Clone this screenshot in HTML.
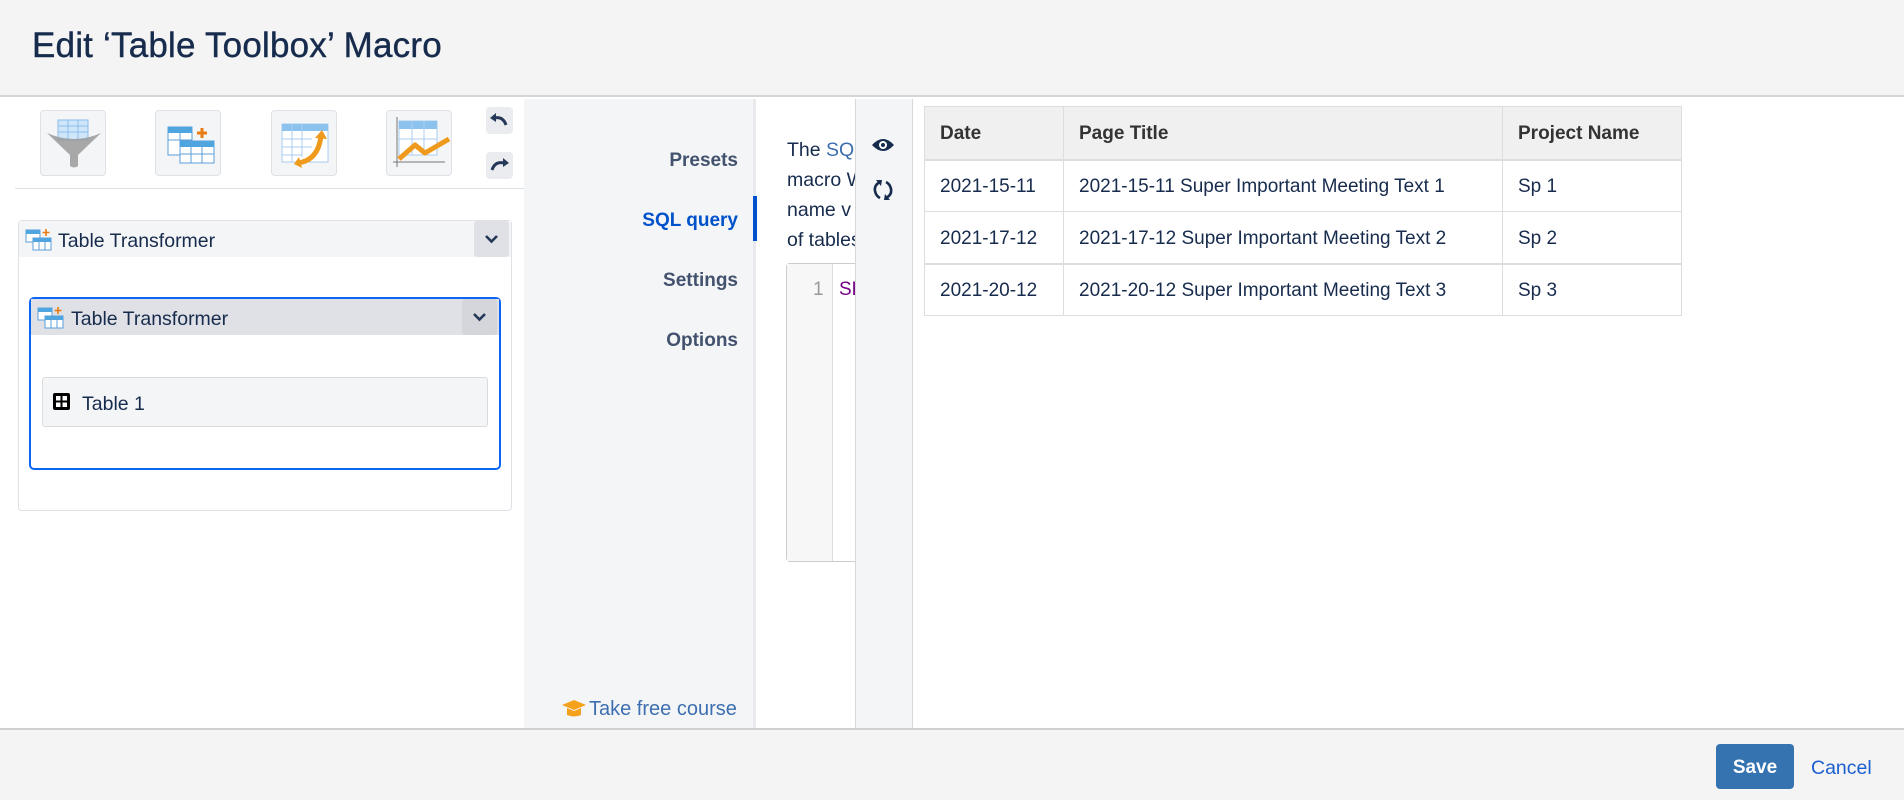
<!DOCTYPE html>
<html><head><meta charset="utf-8">
<style>
*{box-sizing:border-box;margin:0;padding:0}
body{width:1904px;height:800px;overflow:hidden;background:#fff;font-family:"Liberation Sans",sans-serif;color:#172b4d;position:relative}
.abs{position:absolute}
#hdr{left:0;top:0;width:1904px;height:97px;background:#f4f4f4;border-bottom:2px solid #d6d6d6}
#hdr h1{position:absolute;left:32px;top:26px;font-size:35px;font-weight:normal;color:#172b4d;letter-spacing:0.2px;-webkit-text-stroke:0.4px #172b4d}
#ftr{left:0;top:728px;width:1904px;height:72px;background:#f4f4f4;border-top:2px solid #d0d0d0}
.tb{width:66px;height:66px;background:#f4f5f7;border:1px solid #dfe1e6;border-radius:4px;top:110px}
.ur{width:27px;height:27px;background:#ebecf0;border-radius:4px;left:486px}
.nav{right:0;font-size:19px;color:#42526e;text-align:right;width:200px}
td,th{border:1px solid #ddd;padding:3px 15px 0;font-size:19px;text-align:left}
th{background:#f0f0f0;color:#333;font-weight:bold;height:53px}
td{color:#172b4d;height:52px}
</style></head><body>
<div id="hdr" class="abs"><h1>Edit ‘Table Toolbox’ Macro</h1></div>

<div class="abs tb" style="left:40px">
<svg width="66" height="66" viewBox="0 0 66 66"><rect x="17" y="9" width="30" height="20" fill="#cfe6fa" stroke="#8cbde8"/><line x1="17" y1="15" x2="47" y2="15" stroke="#8cbde8"/><line x1="17" y1="21" x2="47" y2="21" stroke="#8cbde8"/><line x1="27" y1="9" x2="27" y2="29" stroke="#8cbde8"/><line x1="37" y1="9" x2="37" y2="29" stroke="#8cbde8"/><path d="M6 22 Q33 34 60 22 L37 44 L37 55 Q33 58 29 55 L29 44 Z" fill="#9a9a9a" opacity="0.85"/></svg></div>
<div class="abs tb" style="left:155px">
<svg width="66" height="66" viewBox="0 0 66 66"><rect x="12" y="16" width="24" height="28" fill="#fff" stroke="#5d9fd8"/><rect x="12" y="16" width="24" height="6" fill="#4ea5e0"/><line x1="12" y1="29" x2="36" y2="29" stroke="#5d9fd8"/><line x1="24" y1="16" x2="24" y2="44" stroke="#5d9fd8"/><rect x="24" y="30" width="34" height="22" fill="#fff" stroke="#5d9fd8"/><rect x="24" y="30" width="34" height="6" fill="#4ea5e0"/><line x1="24" y1="43" x2="58" y2="43" stroke="#5d9fd8"/><line x1="35" y1="30" x2="35" y2="52" stroke="#5d9fd8"/><line x1="46" y1="30" x2="46" y2="52" stroke="#5d9fd8"/><path d="M46 17v10M41 22h10" stroke="#e87b12" stroke-width="3"/></svg></div>
<div class="abs tb" style="left:271px">
<svg width="66" height="66" viewBox="0 0 66 66"><rect x="10" y="13" width="46" height="38" fill="#fff" stroke="#a8cdef"/><rect x="10" y="13" width="46" height="7" fill="#8cc2ee"/><line x1="10" y1="28" x2="40" y2="28" stroke="#a8cdef"/><line x1="10" y1="36" x2="40" y2="36" stroke="#a8cdef"/><line x1="10" y1="44" x2="30" y2="44" stroke="#a8cdef"/><line x1="20" y1="13" x2="20" y2="51" stroke="#a8cdef"/><line x1="30" y1="13" x2="30" y2="46" stroke="#a8cdef"/><path d="M25 52 Q46 50 49 25" stroke="#ef9a1c" stroke-width="5" fill="none"/><path d="M43 27 L50 19 L55 28 Z M27 46 L22 53 L30 57 Z" fill="#ef9a1c"/></svg></div>
<div class="abs tb" style="left:386px">
<svg width="66" height="66" viewBox="0 0 66 66"><rect x="12" y="10" width="38" height="34" fill="#fff" stroke="#a8cdef"/><rect x="12" y="10" width="38" height="8" fill="#8cc2ee"/><line x1="25" y1="10" x2="25" y2="44" stroke="#a8cdef"/><line x1="37" y1="10" x2="37" y2="44" stroke="#a8cdef"/><line x1="12" y1="28" x2="50" y2="28" stroke="#a8cdef"/><line x1="10" y1="6" x2="10" y2="56" stroke="#777"/><line x1="6" y1="51" x2="58" y2="51" stroke="#777"/><path d="M12 48 L28 34 L38 42 L62 28" stroke="#ef9a1c" stroke-width="5" fill="none" stroke-linejoin="round"/></svg></div>
<div class="abs ur" style="top:107px"><svg width="27" height="27" viewBox="0 0 27 27"><path d="M20 18 Q17 9 8 11" stroke="#253858" stroke-width="3" fill="none"/><path d="M4 11 L10 6 L10 15 Z" fill="#253858"/></svg></div>
<div class="abs ur" style="top:152px"><svg width="27" height="27" viewBox="0 0 27 27"><path d="M6 18 Q9 9 18 11" stroke="#253858" stroke-width="3" fill="none"/><path d="M23 11 L17 6 L17 15 Z" fill="#253858"/></svg></div>
<div class="abs" style="left:15px;top:188px;width:509px;height:1px;background:#dfe1e6"></div>

<div class="abs" style="left:18px;top:220px;width:494px;height:291px;border:1px solid #dfe1e6;border-radius:4px"></div>
<div class="abs" style="left:19px;top:221px;width:492px;height:36px;background:#f4f5f7"></div>
<svg class="abs" style="left:25px;top:229px" width="28" height="22" viewBox="0 0 28 22"><rect x="1" y="1" width="14" height="12" fill="#fff" stroke="#5d9fd8"/><rect x="1" y="1" width="14" height="4" fill="#4ea5e0"/><rect x="8" y="9" width="18" height="12" fill="#fff" stroke="#5d9fd8"/><rect x="8" y="9" width="18" height="4" fill="#4ea5e0"/><line x1="14" y1="9" x2="14" y2="21" stroke="#5d9fd8"/><line x1="20" y1="9" x2="20" y2="21" stroke="#5d9fd8"/><path d="M21 0v7M17.5 3.5h7" stroke="#e87b12" stroke-width="1.6"/></svg>
<div class="abs" style="left:58px;top:230px;font-size:19.5px;color:#172b4d">Table Transformer</div>
<div class="abs" style="left:474px;top:221px;width:35px;height:36px;background:#dfe1e6;border-radius:3px"><svg width="35" height="36" viewBox="0 0 35 36"><path d="M12 15 L17.5 20.5 L23 15" stroke="#253858" stroke-width="2.6" fill="none"/></svg></div>

<div class="abs" style="left:29px;top:297px;width:472px;height:173px;border:2px solid #0c66f5;border-radius:5px"></div>
<div class="abs" style="left:31px;top:299px;width:468px;height:36px;background:#dfe1e6"></div>
<svg class="abs" style="left:37px;top:307px" width="28" height="22" viewBox="0 0 28 22"><rect x="1" y="1" width="14" height="12" fill="#fff" stroke="#5d9fd8"/><rect x="1" y="1" width="14" height="4" fill="#4ea5e0"/><rect x="8" y="9" width="18" height="12" fill="#fff" stroke="#5d9fd8"/><rect x="8" y="9" width="18" height="4" fill="#4ea5e0"/><line x1="14" y1="9" x2="14" y2="21" stroke="#5d9fd8"/><line x1="20" y1="9" x2="20" y2="21" stroke="#5d9fd8"/><path d="M21 0v7M17.5 3.5h7" stroke="#e87b12" stroke-width="1.6"/></svg>
<div class="abs" style="left:71px;top:308px;font-size:19.5px;color:#172b4d">Table Transformer</div>
<div class="abs" style="left:462px;top:299px;width:35px;height:36px;background:#d4d6db;border-radius:3px"><svg width="35" height="36" viewBox="0 0 35 36"><path d="M12 15 L17.5 20.5 L23 15" stroke="#253858" stroke-width="2.6" fill="none"/></svg></div>
<div class="abs" style="left:42px;top:377px;width:446px;height:50px;background:#f4f5f7;border:1px solid #dcdcdc;border-radius:3px"></div>
<svg class="abs" style="left:53px;top:393px" width="17" height="17" viewBox="0 0 17 17"><rect x="0" y="0" width="17" height="17" rx="2" fill="#000"/><rect x="3" y="3" width="4.5" height="4.5" fill="#fff"/><rect x="9.5" y="3" width="4.5" height="4.5" fill="#fff"/><rect x="3" y="9.5" width="4.5" height="4.5" fill="#fff"/><rect x="9.5" y="9.5" width="4.5" height="4.5" fill="#fff"/></svg>
<div class="abs" style="left:82px;top:393px;font-size:19.5px;color:#172b4d">Table 1</div>

<div class="abs" style="left:524px;top:99px;width:229px;height:629px;background:#f4f5f7"></div>
<div class="abs" style="left:753px;top:99px;width:3px;height:629px;background:#e9eaee"></div>
<div class="abs" style="left:753px;top:196px;width:4px;height:45px;background:#0052cc"></div>
<div class="abs nav" style="left:538px;top:150px;font-weight:bold">Presets</div>
<div class="abs nav" style="left:538px;top:210px;font-weight:bold;color:#0052cc">SQL query</div>
<div class="abs nav" style="left:538px;top:270px;font-weight:bold">Settings</div>
<div class="abs nav" style="left:538px;top:330px;font-weight:bold">Options</div>
<svg class="abs" style="left:562px;top:700px" width="24" height="17" viewBox="0 0 24 17"><path d="M0 5 L12 0 L24 5 L12 10 Z" fill="#f4a11c"/><path d="M5 8 L5 15 Q12 18 19 15 L19 8 L12 11 Z" fill="#f4a11c"/></svg>
<div class="abs" style="left:589px;top:698px;font-size:20px;color:#3d6fb0">Take free course</div>

<div class="abs" style="left:757px;top:99px;width:98px;height:629px;overflow:hidden;background:#fff">
<div style="position:absolute;left:30px;top:36px;font-size:19.5px;line-height:30px;color:#172b4d;white-space:nowrap">The <span style="color:#3d6fb0">SQL</span> query<br>macro W<br>name v<br>of tables</div>
<div style="position:absolute;left:29px;top:164px;width:120px;height:299px;border:1px solid #ccc;border-radius:4px;background:#fff"></div>
<div style="position:absolute;left:30px;top:165px;width:46px;height:297px;background:#f7f7f7;border-right:1px solid #ddd"></div>
<div style="position:absolute;left:56px;top:180px;font-size:19px;color:#999">1</div>
<div style="position:absolute;left:82px;top:180px;font-size:19px;color:#770088">SELECT</div>
</div>

<div class="abs" style="left:855px;top:99px;width:58px;height:629px;background:#f4f5f7;border-left:1px solid #d8d8d8;border-right:1px solid #d8d8d8"></div>
<svg class="abs" style="left:872px;top:137px" width="22" height="16" viewBox="0 0 22 16"><path d="M0 8 Q11 -4 22 8 Q11 20 0 8 Z" fill="#172b4d"/><circle cx="11" cy="8" r="4" fill="#fff"/><circle cx="11" cy="8" r="2" fill="#172b4d"/></svg>
<svg class="abs" style="left:872px;top:179px" width="22" height="22" viewBox="0 0 22 22"><path d="M8 3 Q2 6 3 12 Q4 17 8 19" stroke="#172b4d" stroke-width="2.6" fill="none"/><path d="M4 1 L10 1 L9 7 Z" fill="#172b4d"/><path d="M14 19 Q20 16 19 10 Q18 5 14 3" stroke="#172b4d" stroke-width="2.6" fill="none"/><path d="M18 21 L12 21 L13 15 Z" fill="#172b4d"/></svg>

<table class="abs" style="left:924px;top:106px;border-collapse:collapse;width:758px">
<tr><th style="width:139px">Date</th><th style="width:439px">Page Title</th><th>Project Name</th></tr>
<tr style="border-top:2px solid #ddd"><td>2021-15-11</td><td>2021-15-11 Super Important Meeting Text 1</td><td>Sp 1</td></tr>
<tr style="border-bottom:2px solid #ddd"><td>2021-17-12</td><td>2021-17-12 Super Important Meeting Text 2</td><td>Sp 2</td></tr>
<tr><td>2021-20-12</td><td>2021-20-12 Super Important Meeting Text 3</td><td>Sp 3</td></tr>
</table>

<div id="ftr" class="abs">
<div class="abs" style="left:1716px;top:14px;width:78px;height:45px;background:#3572b0;border-radius:4px;color:#fff;font-weight:bold;font-size:19px;text-align:center;line-height:47px">Save</div>
<div class="abs" style="left:1811px;top:27px;font-size:19.5px;color:#1a5fd0">Cancel</div>
</div>
</body></html>
